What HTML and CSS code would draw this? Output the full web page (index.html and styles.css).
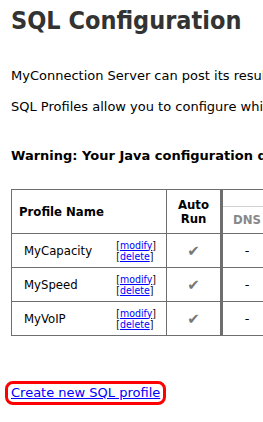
FILE: index.html
```html
<!DOCTYPE html>
<html>
    <head>
        <meta name="viewport" content="width=device-width, initial-scale=1"/>
        <link rel="stylesheet" href="styles.css">
    </head>

    <body>
        <div class="page">
            <h1 class="page__title">SQL Configuration</h1>

            <p class="page__text">MyConnection Server can post its results to an SQL database after every test.</p>
            <p class="page__text page__text_next">SQL Profiles allow you to configure which results are posted and where they go.</p>

            <p class="page__warning">Warning: Your Java configuration does not include a JDBC driver for your database.</p>

            <table class="profiles">
                <thead>
                    <tr class="profiles__group-row">
                        <th class="profiles__name-head" rowspan="2">Profile Name</th>
                        <th class="profiles__run-head" rowspan="2">Auto<br>Run</th>
                        <th class="profiles__group" colspan="6">Tests</th>
                    </tr>
                    <tr class="profiles__test-row">
                        <th class="profiles__test">DNS</th>
                        <th class="profiles__test">HTTP</th>
                        <th class="profiles__test">Ping</th>
                        <th class="profiles__test">Speed</th>
                        <th class="profiles__test">VoIP</th>
                        <th class="profiles__test">Video</th>
                    </tr>
                </thead>
                <tbody>
                    <tr class="profiles__row">
                        <td class="profiles__name">
                            <div class="profile-cell">
                                <span>MyCapacity</span>
                                <span class="profile-cell__actions">[<a href="#">modify</a>]<br>[<a href="#">delete</a>]</span>
                            </div>
                        </td>
                        <td class="profiles__run">&#10004;</td>
                        <td class="profiles__value">-</td>
                        <td class="profiles__value">-</td>
                        <td class="profiles__value">-</td>
                        <td class="profiles__value">-</td>
                        <td class="profiles__value">-</td>
                        <td class="profiles__value">-</td>
                    </tr>
                    <tr class="profiles__row">
                        <td class="profiles__name">
                            <div class="profile-cell">
                                <span>MySpeed</span>
                                <span class="profile-cell__actions">[<a href="#">modify</a>]<br>[<a href="#">delete</a>]</span>
                            </div>
                        </td>
                        <td class="profiles__run">&#10004;</td>
                        <td class="profiles__value">-</td>
                        <td class="profiles__value">-</td>
                        <td class="profiles__value">-</td>
                        <td class="profiles__value">-</td>
                        <td class="profiles__value">-</td>
                        <td class="profiles__value">-</td>
                    </tr>
                    <tr class="profiles__row">
                        <td class="profiles__name">
                            <div class="profile-cell">
                                <span>MyVoIP</span>
                                <span class="profile-cell__actions">[<a href="#">modify</a>]<br>[<a href="#">delete</a>]</span>
                            </div>
                        </td>
                        <td class="profiles__run">&#10004;</td>
                        <td class="profiles__value">-</td>
                        <td class="profiles__value">-</td>
                        <td class="profiles__value">-</td>
                        <td class="profiles__value">-</td>
                        <td class="profiles__value">-</td>
                        <td class="profiles__value">-</td>
                    </tr>
                </tbody>
            </table>

            <div class="create">
                <a href="#" class="create__link">Create new SQL profile</a>
            </div>
        </div>
    </body>
</html>
```

FILE: styles.css
```css
body, html {
    margin: 0;
    background-color: #fff;
    overflow: hidden;
    font-family: "DejaVu Sans", Verdana, sans-serif;
    font-size: 13px;
    line-height: 16px;
    color: #000;
}

* {
    box-sizing: border-box;
}

a {
    color: #00f;
}

.page {
    padding-left: 11px;
    width: 1000px;
}

.page__title {
    margin: 7px 0 0 0;
    font-family: "DejaVu Sans Condensed", "DejaVu Sans", sans-serif;
    font-size: 25px;
    line-height: 28px;
    font-weight: bold;
    color: #333;
    white-space: nowrap;
}

.page__text {
    margin: 33px 0 0 0;
    white-space: nowrap;
}

.page__text_next {
    margin-top: 15px;
}

.page__warning {
    margin: 33px 0 0 0;
    font-weight: bold;
    white-space: nowrap;
}

/* profiles table */

.profiles {
    margin-top: 25px;
    border-collapse: separate;
    border-spacing: 0;
    table-layout: fixed;
    border-top: 1px solid #6e6e6e;
    border-left: 1px solid #6e6e6e;
}

.profiles th {
    font-family: "DejaVu Sans Condensed", "DejaVu Sans", sans-serif;
    font-size: 13px;
    font-weight: bold;
    padding: 0;
}

.profiles td {
    padding: 0;
}

.profiles__name-head {
    width: 155px;
    text-align: left;
    padding-left: 7px !important;
    border-right: 1px solid #6e6e6e;
    border-bottom: 1px solid #6e6e6e;
}

.profiles__run-head {
    width: 56px;
    line-height: 14px;
    text-align: center;
    border-right: 3px solid #6e6e6e;
    border-bottom: 1px solid #6e6e6e;
}

.profiles__group-row {
    height: 17px;
}

.profiles__group {
    color: #888;
    border-bottom: 1px solid #d0d0d0;
    border-right: 1px solid #6e6e6e;
}

.profiles__test-row {
    height: 27px;
}

.profiles__test {
    width: 48px;
    color: #888;
    text-align: center;
    border-bottom: 1px solid #6e6e6e;
}

.profiles__row {
    height: 34px;
}

.profiles__name {
    border-right: 1px solid #6e6e6e;
    border-bottom: 1px solid #6e6e6e;
}

.profile-cell {
    display: flex;
    justify-content: space-between;
    align-items: center;
    padding: 0 10px 0 12px;
    font-family: "DejaVu Sans Condensed", "DejaVu Sans", sans-serif;
    font-size: 13px;
}

.profile-cell__actions {
    font-size: 10.5px;
    line-height: 11px;
}

.profiles__run {
    text-align: center;
    color: #777;
    font-size: 15px;
    border-right: 3px solid #6e6e6e;
    border-bottom: 1px solid #6e6e6e;
}

.profiles__value {
    text-align: center;
    border-bottom: 1px solid #6e6e6e;
}

/* create link */

.create {
    margin: 45px 0 0 -6px;
}

.create__link {
    display: inline-block;
    border: 3px solid #f00;
    border-radius: 8px;
    padding: 0 3px;
    line-height: 18px;
}
```
